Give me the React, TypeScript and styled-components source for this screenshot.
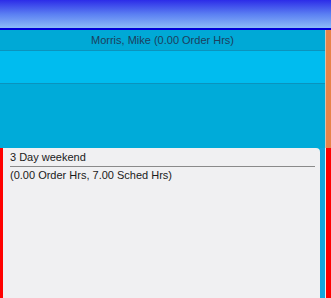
import React from 'react';
import styled, { createGlobalStyle } from 'styled-components';

const GlobalStyle = createGlobalStyle`
  html, body {
    margin: 0;
    padding: 0;
    background: #00abd9;
    font-family: "Liberation Sans", Arial, sans-serif;
  }
`;

const Screen = styled.div`
  width: 331px;
  height: 298px;
  display: flex;
  flex-direction: column;
  overflow: hidden;
`;

const TitleBar = styled.div`
  height: 28px;
  flex: none;
  background: linear-gradient(to bottom, #2c2ce8 0%, #5a7ef2 50%, #8cbcf8 100%);
  border-bottom: 2px solid #0000d8;
`;

const Schedule = styled.div`
  display: flex;
  height: 118px;
  flex: none;
`;

const Lanes = styled.div`
  flex: 1;
  display: flex;
  flex-direction: column;
`;

const Lane = styled.div<{ $h: number; $bg: string }>`
  height: ${(p) => p.$h}px;
  background: ${(p) => p.$bg};
  border-bottom: 1px solid #0b93bd;
  display: flex;
  align-items: center;
  justify-content: center;
  font-size: 11px;
  color: #1d3e5e;
  &:last-child {
    border-bottom: none;
    flex: 1;
  }
`;

const SideStrip = styled.div`
  width: 5px;
  border-left: 1px solid #d8c0b0;
  background: #e8834a;
`;

const Lower = styled.div`
  flex: 1;
  display: flex;
`;

const RedEdge = styled.div<{ $w: number }>`
  width: ${(p) => p.$w}px;
  background: #ff0000;
`;

const EventPanel = styled.div`
  flex: 1;
  background: #f0f0f2;
  border-top-right-radius: 4px;
  padding: 3px 5px 0 7px;
  font-size: 11px;
  color: #1a1a1a;
`;

const EventTitle = styled.div`
  line-height: 13px;
  padding-bottom: 2px;
  border-bottom: 1px solid #8a8a8a;
`;

const EventHours = styled.div`
  line-height: 13px;
  margin-top: 2px;
`;

const BlueGutter = styled.div`
  width: 5px;
  background: #14a6de;
  border-right: 1px solid #e0f0f8;
`;

export default function App() {
  return (
    <Screen>
      <GlobalStyle />
      <TitleBar />
      <Schedule>
        <Lanes>
          <Lane $h={20} $bg="#00a9d6">Morris, Mike (0.00 Order Hrs)</Lane>
          <Lane $h={32} $bg="#00bcef" />
          <Lane $h={66} $bg="#00abd9" />
        </Lanes>
        <SideStrip />
      </Schedule>
      <Lower>
        <RedEdge $w={3} />
        <EventPanel>
          <EventTitle>3 Day weekend</EventTitle>
          <EventHours>(0.00 Order Hrs, 7.00 Sched Hrs)</EventHours>
        </EventPanel>
        <BlueGutter />
        <RedEdge $w={5} />
      </Lower>
    </Screen>
  );
}
